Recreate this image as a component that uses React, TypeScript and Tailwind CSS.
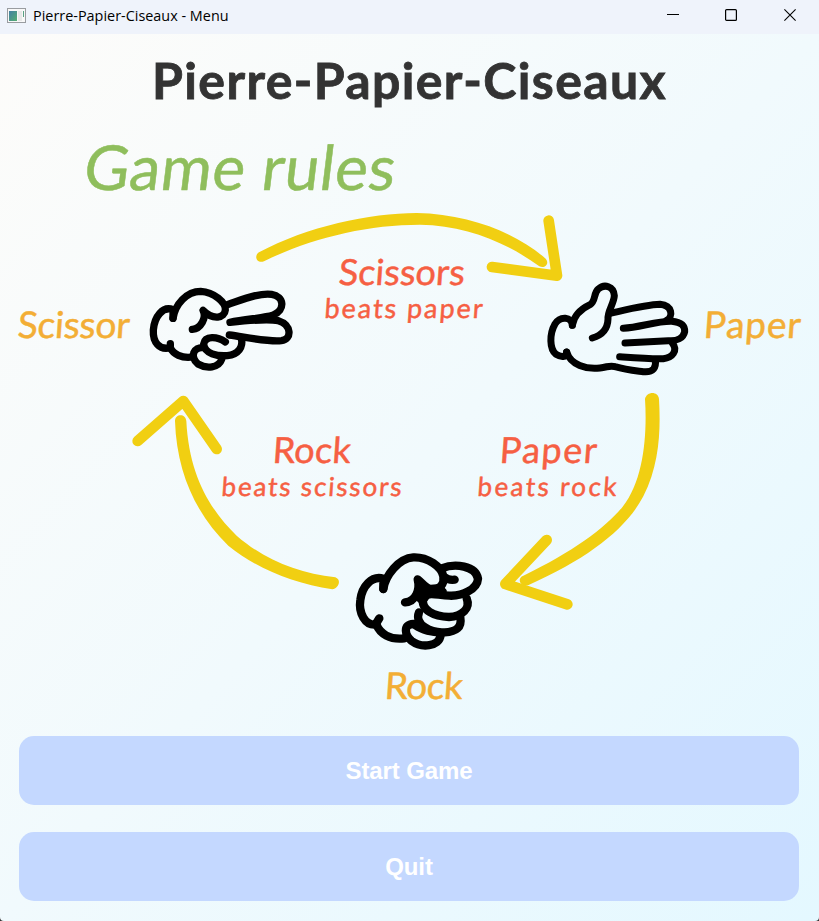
import React from "react";

const YELLOW = "#f1cf12";

type LabelProps = {
  x: number;
  y: number;
  width: number;
  size: number;
  fill: string;
  slant?: number;
  children: string;
};

function Label({ x, y, width, size, fill, slant = -4, children }: LabelProps) {
  return (
    <text
      transform={`translate(${x} ${y}) skewX(${slant})`}
      fontSize={size}
      fill={fill}
      stroke={fill}
      strokeWidth={0.5}
      strokeLinejoin="round"
      textLength={width}
      lengthAdjust="spacing"
      className="font-['Lato','Open_Sans',sans-serif]"
    >
      {children}
    </text>
  );
}

const hand = {
  fill: "none",
  stroke: "#000",
  strokeWidth: 22,
  strokeLinecap: "round" as const,
  strokeLinejoin: "round" as const,
};

function ScissorsHand() {
  return (
    <g transform="translate(140 280) scale(.33333)" {...hand}>
      <path d="M99 115C106 72 140 34 182 34C222 36 258 68 256 90C254 114 220 122 189 91C201 113 182 146 157 148" />
      <path d="M99 115V89C68 77 43 111 40 150C38 187 58 211 91 203V191" />
      <path d="M91 203C99 222 125 236 158 231" />
      <path d="M256 186C232 169 195 166 191 192C194 222 232 229 262 227C296 223 310 200 304 176" />
      <path d="M191 203C161 199 148 230 174 252C200 267 236 264 245 238" />
      <path d="M262 74C310 58 358 38 395 43C432 48 438 90 398 106C375 114 315 117 270 127C325 121 386 116 415 122C455 134 457 178 424 182C380 186 315 171 268 165" />
    </g>
  );
}

function PaperHand() {
  return (
    <g transform="translate(540 275) scale(.33333)" {...hand} strokeWidth={21}>
      <path d="M97 151C102 119 127 100 150 89C168 78 160 54 175 42C193 26 221 33 223 62C222 86 202 108 204 132C203 163 185 181 157 189" />
      <path d="M97 151C96 124 60 122 45 147C28 177 28 222 48 238C63 247 78 249 80 231" />
      <path d="M80 231C92 270 139 284 180 279C204 276 210 270 225 275C258 285 286 287 310 290C341 293 349 277 346 256" />
      <path d="M210 115C260 104 320 89 360 88C398 92 400 125 380 136" />
      <path d="M250 160C300 157 350 138 395 139C425 142 435 152 434 170C430 189 411 199 385 197L255 204" />
      <path d="M397 204C415 227 397 248 370 251C330 252 280 248 239 245" />
    </g>
  );
}

function RockHand() {
  return (
    <g transform="translate(345 545) scale(.33333)" {...hand} strokeWidth={25}>
      <path d="M115 132C121 91 161 40 205 37C248 35 290 66 295 94C299 118 284 134 261 135C240 130 231 112 218 103C226 134 213 169 180 172" />
      <path d="M115 132V101C80 91 51 124 46 165C40 205 61 241 91 239L103 220" />
      <path d="M94 238C105 267 135 285 178 280" />
      <path d="M290 70C330 54 392 62 399 101C397 131 354 154 313 152C284 152 260 142 244 150" />
      <path d="M299 97C309 105 320 105 329 104" />
      <path d="M234 155C226 198 270 215 312 216C352 214 377 190 365 160" />
      <path d="M222 202C207 239 258 265 299 262C335 260 351 246 346 218" />
      <path d="M205 237C172 238 180 272 200 288C228 309 283 307 287 270" />
      <path d="M205 237C220 252 250 262 287 264" strokeWidth="22" />
      <path d="M218 103L240 130L284 126L296 138L250 148L234 172L222 162Z" fill="#000" strokeWidth="18" />
    </g>
  );
}

function Arrows() {
  const head = {
    fill: "none",
    stroke: YELLOW,
    strokeWidth: 32,
    strokeLinecap: "round" as const,
    strokeLinejoin: "round" as const,
  };
  return (
    <g fill={YELLOW}>
      <g transform="translate(240 200) scale(.33333)">
        <path d="M57 157C200 80 390 39 530 39C690 42 830 100 917 176C930 192 914 207 898 199C800 128 680 76 540 74C380 74 210 115 72 184C51 192 40 168 57 157Z" />
        <path d="M926 62L951 227L756 201" {...head} />
      </g>
      <g transform="translate(120 385) scale(.33333)">
        <path d="M165 108C165 86 197 84 199 108C207 270 270 375 350 452C433 524 535 565 646 577C667 585 654 611 637 613C520 595 408 550 325 482C230 390 170 265 165 108Z" />
        <path d="M53 168L190 48L290 192" {...head} />
      </g>
      <g transform="translate(460 385) scale(.33333)">
        <path d="M555 42C560 18 595 18 597 42C602 130 600 235 550 334C500 430 386 520 206 600C181 609 169 580 190 572C340 500 440 425 488 365C551 287 562 150 555 42Z" />
        <path d="M260 465L136 597L322 658" {...head} />
      </g>
    </g>
  );
}

function RulesDiagram() {
  return (
    <svg
      viewBox="0 115 819 600"
      className="block h-[600px] w-[819px] shrink-0"
      role="img"
      aria-label="Game rules"
    >
      <Arrows />
      <ScissorsHand />
      <PaperHand />
      <RockHand />
      <Label x={82} y={190} width={311} size={62} fill="#8fbe5c" slant={-7}>Game rules</Label>
      <Label x={338} y={285} width={126} size={36} fill="#f65f43">Scissors</Label>
      <Label x={324} y={318} width={158} size={27} fill="#f65f43">beats paper</Label>
      <Label x={17} y={338} width={112} size={37} fill="#f3ae35">Scissor</Label>
      <Label x={703} y={338} width={97} size={37} fill="#f3ae35">Paper</Label>
      <Label x={272} y={463} width={78} size={36} fill="#f65f43">Rock</Label>
      <Label x={221} y={496} width={180} size={26} fill="#f65f43">beats scissors</Label>
      <Label x={499} y={463} width={97} size={36} fill="#f65f43">Paper</Label>
      <Label x={477} y={496} width={139} size={26} fill="#f65f43">beats rock</Label>
      <Label x={384} y={699} width={78} size={37} fill="#f3ae35">Rock</Label>
    </svg>
  );
}

function TitleBar() {
  return (
    <header className="flex h-[34px] shrink-0 items-center bg-[#eff3fb] pb-1 text-black">
      <svg width="19" height="15" viewBox="0 0 19 15" className="ml-[7px]">
        <defs>
          <linearGradient id="thumb" x1="0" y1="0" x2="1" y2="1">
            <stop offset="0" stopColor="#4480a4" />
            <stop offset="1" stopColor="#55ae72" />
          </linearGradient>
        </defs>
        <rect x=".5" y=".5" width="18" height="14" fill="#f8f8f8" stroke="#999ca0" />
        <rect x="2" y="3" width="8" height="10" fill="url(#thumb)" />
        <rect x="11" y="3" width="4" height="10" fill="#e8e8e8" />
        <rect x="16" y="3" width="1" height="6" fill="#58a184" />
      </svg>
      <h2 className="ml-[7px] whitespace-nowrap pt-0.5 font-['Open_Sans','Noto_Sans',sans-serif] text-[14.4px] leading-5 tracking-[0.01px]">
        Pierre-Papier-Ciseaux - Menu
      </h2>
      <div className="ml-auto flex items-center pr-[23px]">
        <svg width="12" height="12" viewBox="0 0 12 12" fill="none" stroke="currentColor" className="mr-[46px]" aria-label="Minimize">
          <path d="M0 5.5h12" />
        </svg>
        <svg width="12" height="12" viewBox="0 0 12 12" fill="none" stroke="currentColor" className="mr-[47px]" aria-label="Maximize">
          <rect x=".6" y=".6" width="10.8" height="10.8" rx="1" strokeWidth="1.2" />
        </svg>
        <svg width="12" height="12" viewBox="0 0 12 12" fill="none" stroke="currentColor" aria-label="Close">
          <path d="M.4.4l11.2 11.2M11.6.4L.4 11.6" strokeWidth="1.1" />
        </svg>
      </div>
    </header>
  );
}

function MenuButton({ children }: { children: string }) {
  return (
    <button className="h-[69px] w-full rounded-[15px] bg-[#c4d8ff] font-['Liberation_Sans',Arial,sans-serif] text-2xl font-bold tracking-[-0.1px] text-white">
      {children}
    </button>
  );
}

export default function App() {
  return (
    <div className="h-[921px] w-[819px] bg-[#333333]">
      <div className="flex h-full flex-col overflow-hidden rounded-b-[4px]">
        <TitleBar />
        <main className="flex flex-1 flex-col bg-linear-to-br from-[#fdfcfa] via-[#f1fafd] to-[#e4f8ff]">
          <h1 className="flex h-[81px] items-start justify-center whitespace-nowrap pt-[16px] font-['Lato','Open_Sans',sans-serif] text-[50px] leading-[60px] font-bold tracking-[1.35px] text-[#333333] [-webkit-text-stroke:0.8px_#333333]">
            Pierre-Papier-Ciseaux
          </h1>
          <RulesDiagram />
          <nav className="mt-[21px] flex flex-col gap-[27px] pr-5 pl-[19px]">
            <MenuButton>Start Game</MenuButton>
            <MenuButton>Quit</MenuButton>
          </nav>
        </main>
      </div>
    </div>
  );
}
